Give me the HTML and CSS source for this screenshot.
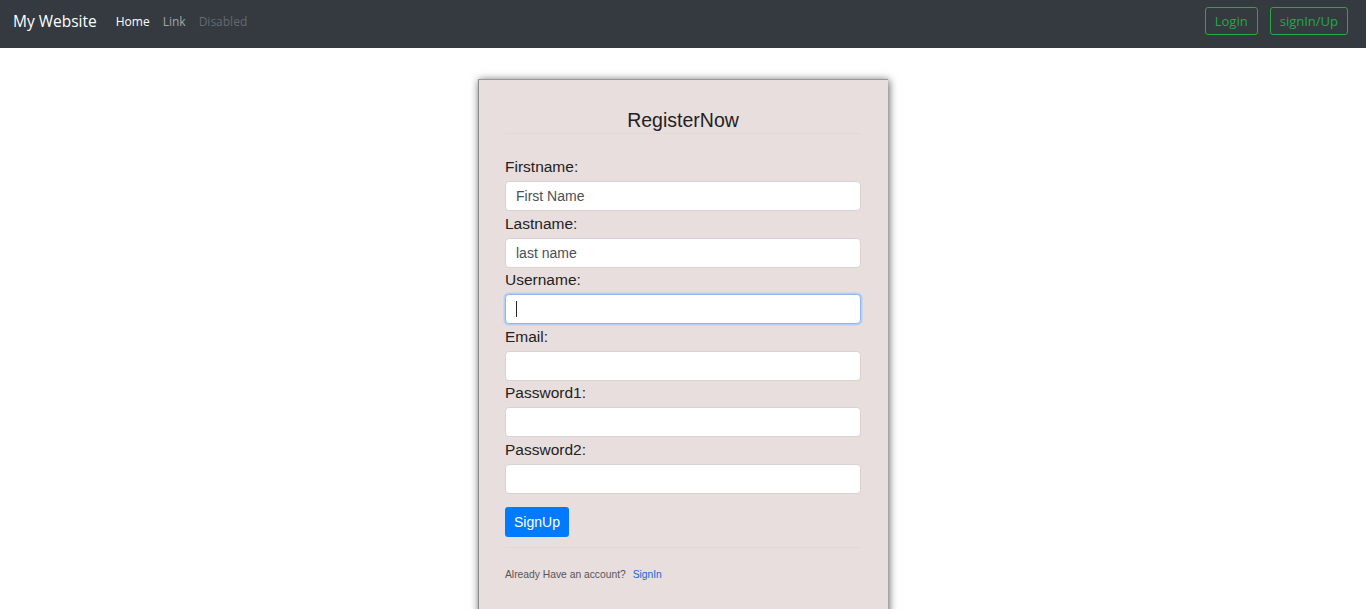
FILE: index.html
```html
<!DOCTYPE html>
<html lang="en">
<head>
<meta charset="utf-8">
<title>Register</title>
<link rel="stylesheet" href="styles.css">
</head>
<body>
<nav class="navbar">
  <a class="brand" href="#">My Website</a>
  <ul class="nav-links">
    <li><a class="nav-link active" href="#">Home</a></li>
    <li><a class="nav-link" href="#">Link</a></li>
    <li><span class="nav-link disabled">Disabled</span></li>
  </ul>
  <div class="nav-actions">
    <button class="btn-outline">Login</button>
    <button class="btn-outline">signIn/Up</button>
  </div>
</nav>
<main class="page">
  <section class="card">
    <h2 class="card-title">RegisterNow</h2>
    <hr class="divider">
    <form class="form">
      <div class="field">
        <label class="label">Firstname:</label>
        <input class="input" type="text" placeholder="First Name">
      </div>
      <div class="field">
        <label class="label">Lastname:</label>
        <input class="input" type="text" placeholder="last name">
      </div>
      <div class="field">
        <label class="label">Username:</label>
        <div class="input-wrap">
          <input class="input focused" type="text">
          <span class="caret"></span>
        </div>
      </div>
      <div class="field">
        <label class="label">Email:</label>
        <input class="input" type="email">
      </div>
      <div class="field">
        <label class="label">Password1:</label>
        <input class="input" type="password">
      </div>
      <div class="field">
        <label class="label">Password2:</label>
        <input class="input" type="password">
      </div>
      <button class="btn-primary" type="button">SignUp</button>
    </form>
    <hr class="divider bottom">
    <p class="footer-text">Already Have an account? <a class="signin" href="#">SignIn</a></p>
  </section>
</main>
</body>
</html>
```
FILE: styles.css
```css
* { box-sizing: border-box; }
html, body { margin: 0; padding: 0; }
body {
  background: #fff;
  font-family: "Liberation Sans", Arial, sans-serif;
  height: 609px;
  overflow: hidden;
}
.navbar {
  height: 48px;
  background: #343a40;
  display: flex;
  align-items: center;
  padding: 0 18px 0 13px;
  font-family: "Open Sans", "Noto Sans", sans-serif;
}
.brand {
  color: #fff;
  text-decoration: none;
  font-size: 15.5px;
  margin-right: 19px;
  margin-top: -7px;
}
.nav-links {
  list-style: none;
  margin: 0;
  padding: 0;
  display: flex;
  margin-top: -6px;
}
.nav-link {
  display: block;
  font-size: 12px;
  color: rgba(255,255,255,.55);
  text-decoration: none;
  margin-right: 13px;
}
.nav-link.active { color: #fff; }
.nav-link.disabled { color: rgba(255,255,255,.25); }
.nav-actions {
  margin-left: auto;
  display: flex;
  gap: 12px;
  margin-top: -7px;
}
.btn-outline {
  font-family: "Open Sans", "Noto Sans", sans-serif;
  font-size: 13px;
  color: #28a745;
  background: transparent;
  border: 1px solid #28a745;
  border-radius: 3px;
  height: 28px;
  padding: 0 9px;
}
.page {
  display: flex;
  justify-content: center;
  padding-top: 31px;
}
.card {
  width: 410px;
  height: 560px;
  background: #e9dede;
  border-left: 1px solid #8a8a8a;
  border-top: 1px solid #9a9a9a;
  box-shadow: 1px 1px 8px rgba(0,0,0,.65);
  padding: 28px 27px 0 26px;
}
.card-title {
  margin: 0;
  text-align: center;
  font-weight: normal;
  font-size: 19.5px;
  line-height: 24px;
  color: #222;
}
.divider {
  border: 0;
  border-top: 1px solid #e4d7d7;
  margin: 1px 0 21px;
}
.form { display: flex; flex-direction: column; }
.field { margin-bottom: 0.6px; }
.label {
  display: block;
  font-size: 15.5px;
  line-height: 24px;
  margin-bottom: 2px;
  color: #222;
}
.input-wrap { position: relative; }
.input {
  display: block;
  width: 100%;
  height: 30px;
  border: 1px solid #d8d2d2;
  border-radius: 4px;
  background: #fff;
  padding: 0 10px;
  font-family: "Liberation Sans", Arial, sans-serif;
  font-size: 14px;
  color: #495057;
  outline: none;
}
.input::placeholder { color: #495057; opacity: 1; }
.input.focused {
  border-color: #90b8ec;
  box-shadow: 0 0 0 1.5px #b3cff3;
}
.caret {
  position: absolute;
  left: 11px;
  top: 7px;
  width: 1px;
  height: 16px;
  background: #222;
}
.btn-primary {
  align-self: flex-start;
  margin-top: 12.5px;
  background: #007bff;
  color: #fff;
  border: 0;
  border-radius: 3px;
  height: 30px;
  width: 64px;
  font-family: "Liberation Sans", Arial, sans-serif;
  font-size: 14px;
}
.divider.bottom { margin: 10px 0 21px; }
.footer-text {
  margin: 0;
  font-size: 10.3px;
  color: #555;
}
.signin {
  color: #1565d8;
  text-decoration: none;
  margin-left: 4px;
}
```
